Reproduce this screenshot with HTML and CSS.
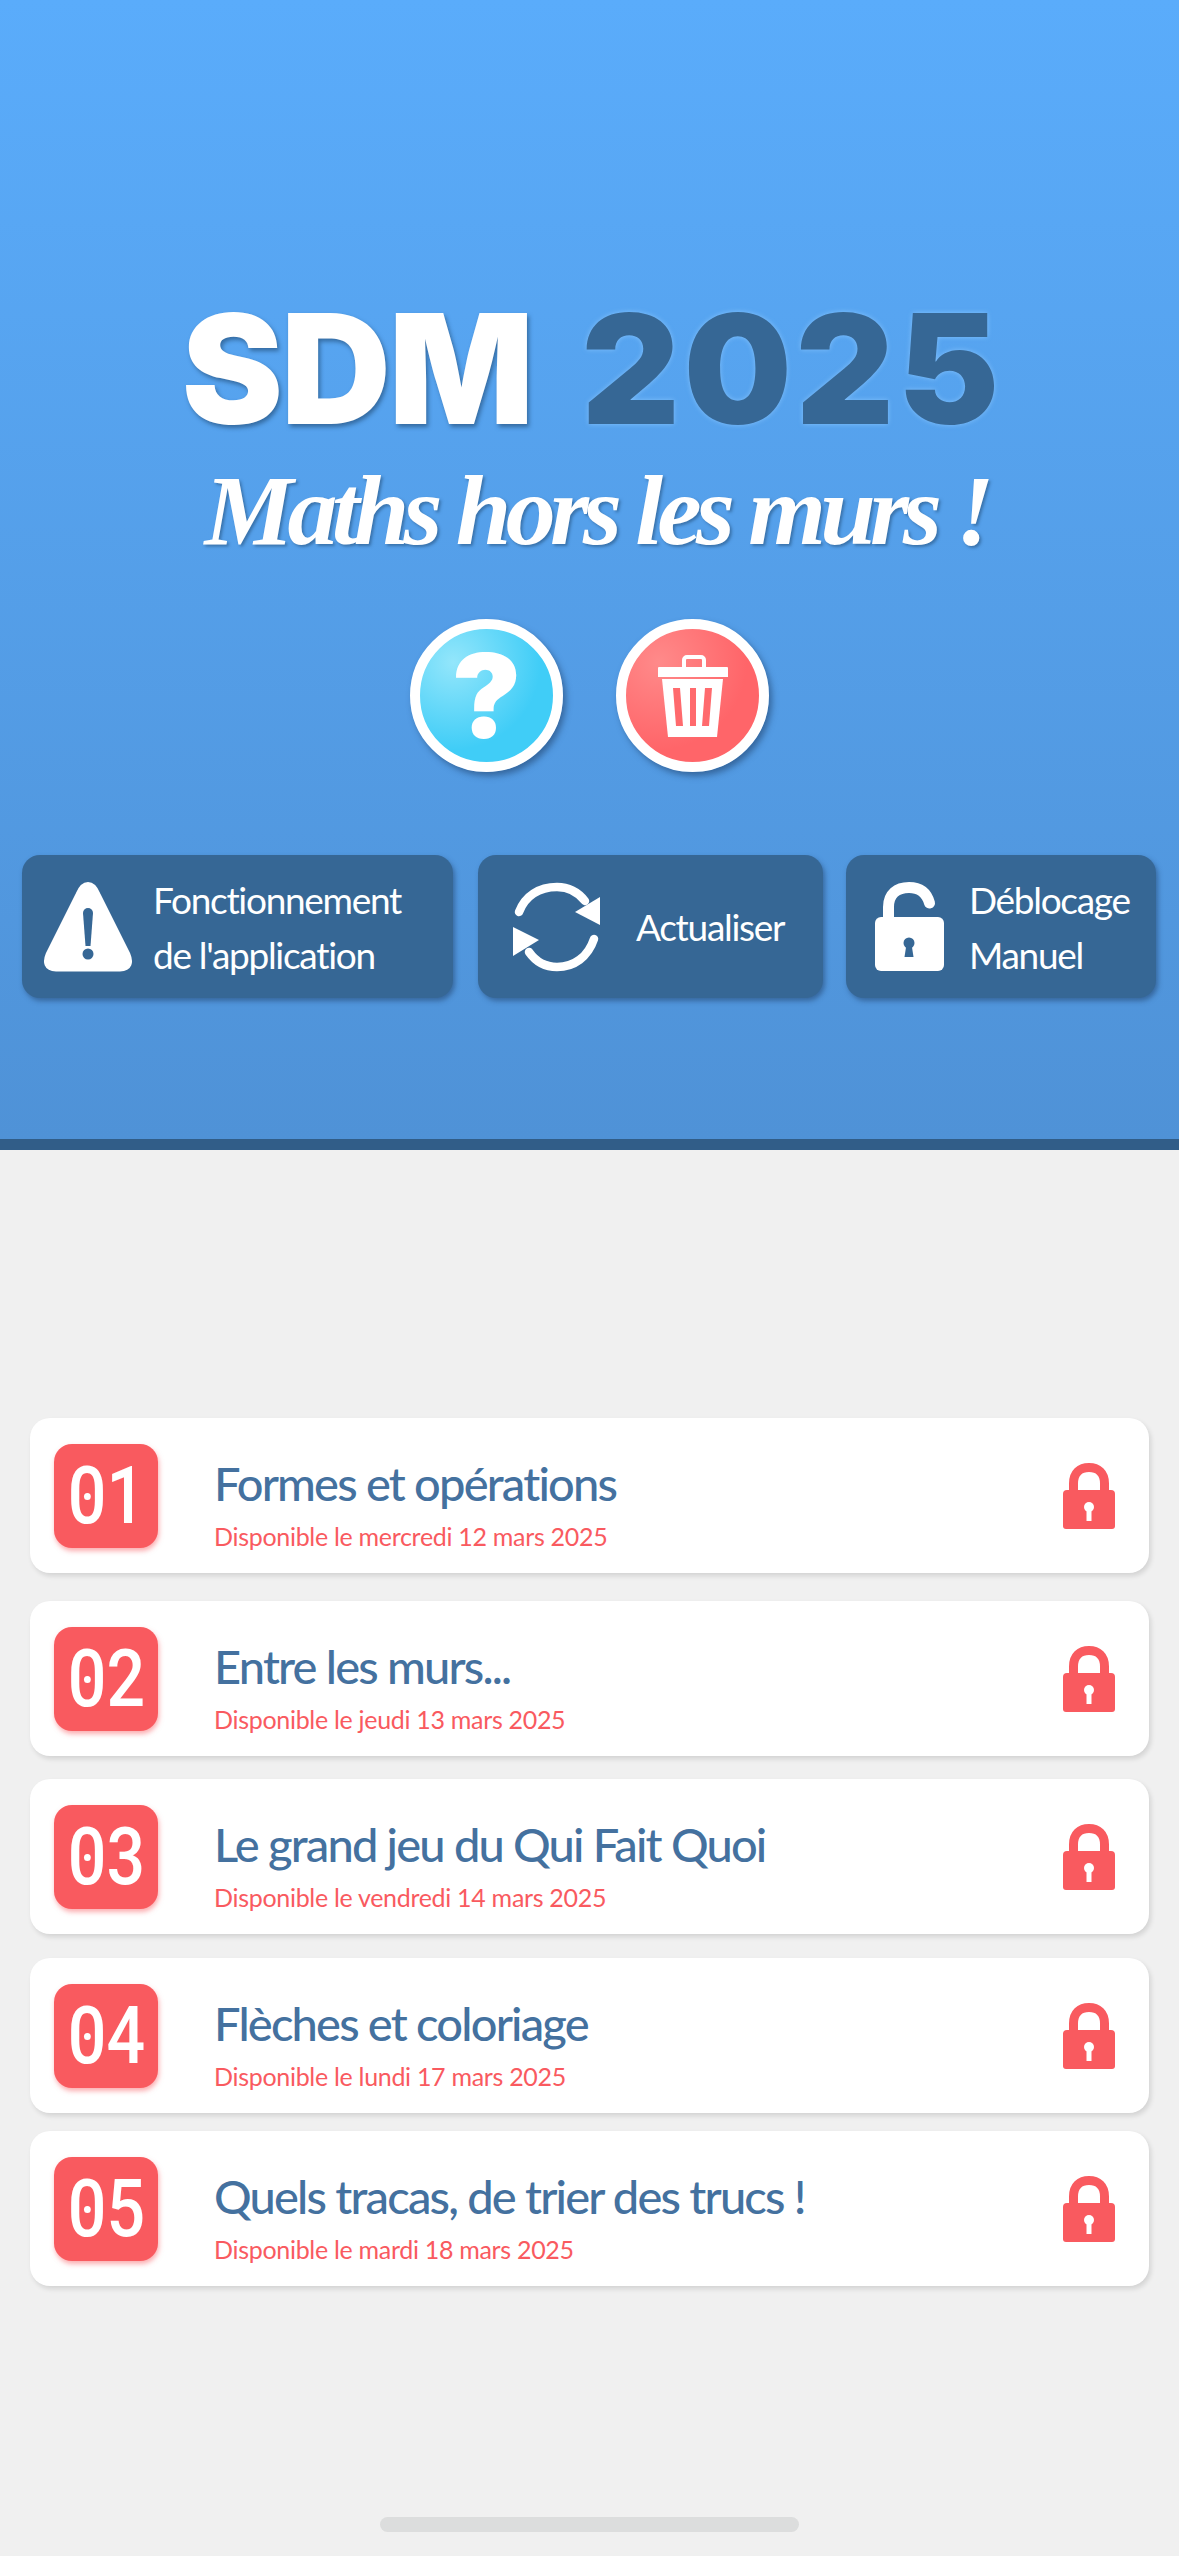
FILE: index.html
```html
<!DOCTYPE html>
<html lang="fr">
<head>
    <meta charset="UTF-8">
    <meta name="viewport" content="width=device-width, initial-scale=1.0">
    <link rel="stylesheet" href="styles.css">
    <title>SDM 2025</title>
</head>
<body>
    <header class="hero">
        <h1 class="logo"><span class="logoWhite">SDM</span> <span class="logoDark">2025</span></h1>
        <p class="tagline">Maths hors les murs !</p>

        <div class="roundBtns">
            <div class="roundBtn helpBtn">?</div>
            <div class="roundBtn trashBtn">
                <svg class="trashIcon" viewBox="0 0 70 82">
                    <path d="M26 12V5a3 3 0 0 1 3-3h14a3 3 0 0 1 3 3v7" fill="none" stroke="#fff" stroke-width="4"/>
                    <path d="M1 12h68a1 1 0 0 1 1 1v9H0v-9a1 1 0 0 1 1-1z" fill="#fff"/>
                    <path d="M4 24h61l-6 58H10z" fill="#fff"/>
                    <path d="M15 33h7l3 38h-7zM32 33h6v38h-6zM47 33h7l-3 38h-7z" fill="#ff6a6d"/>
                </svg>
            </div>
        </div>

        <div class="actions">
            <div class="action actionInfo">
                <svg class="actionIcon" width="90" height="90" viewBox="0 0 90 90">
                    <path d="M45 4.500 C41 4.500 39 8 37 13 L7 73 C4 80 5 85 13 85 H77 C85 85 86 80 83 73 L53 13 C51 8 49 4.500 45 4.500Z" fill="#fff" stroke="#fff" stroke-width="9" stroke-linejoin="round"/>
                    <path d="M40 31a5 5 0 0 1 10 0l-2.500 33h-5z" fill="#366795"/>
                    <circle cx="45" cy="72" r="5.500" fill="#366795"/>
                </svg>
                <span class="actionText">Fonctionnement<br>de l'application</span>
            </div>
            <div class="action actionRefresh">
                <svg class="actionIcon" width="88" height="90" viewBox="0 0 88 90">
                    <path d="M6 30 C12 14 26 5 44 5 C55 5 65 10 72 19" fill="none" stroke="#fff" stroke-width="8.500" stroke-linecap="round"/>
                    <path d="M62 30 L87 15 V43Z" fill="#fff"/>
                    <path d="M81 57 C75 75 61 85 44 85 C33 85 23 80 16 70" fill="none" stroke="#fff" stroke-width="8.500" stroke-linecap="round"/>
                    <path d="M0 45 L26 58 L0 74Z" fill="#fff"/>
                </svg>
                <span class="actionText">Actualiser</span>
            </div>
            <div class="action actionUnlock">
                <svg class="actionIcon" width="69" height="89" viewBox="0 0 69 89">
                    <path d="M13.500 40V25C13.500 12 22 5.500 34 5.500C46 5.500 52 12 54.500 21" fill="none" stroke="#fff" stroke-width="11" stroke-linecap="round"/>
                    <rect y="35" width="69" height="54" rx="6" fill="#fff"/>
                    <circle cx="34" cy="61" r="5.500" fill="#366795"/>
                    <path d="M31.500 62h5l2 13h-9z" fill="#366795"/>
                </svg>
                <span class="actionText">Déblocage<br>Manuel</span>
            </div>
        </div>
    </header>

    <main class="list">
        <div class="card">
            <div class="badge"><span class="num"><span class="zero">0</span>1</span></div>
            <div class="cardText">
                <div class="cardTitle">Formes et opérations</div>
                <div class="cardDate">Disponible le mercredi 12 mars 2025</div>
            </div>
            <svg class="lock" viewBox="0 0 52 66"><use href="#lockShape"/></svg>
        </div>
        <div class="card">
            <div class="badge"><span class="num"><span class="zero">0</span>2</span></div>
            <div class="cardText">
                <div class="cardTitle">Entre les murs...</div>
                <div class="cardDate">Disponible le jeudi 13 mars 2025</div>
            </div>
            <svg class="lock" viewBox="0 0 52 66"><use href="#lockShape"/></svg>
        </div>
        <div class="card">
            <div class="badge"><span class="num"><span class="zero">0</span>3</span></div>
            <div class="cardText">
                <div class="cardTitle">Le grand jeu du Qui Fait Quoi</div>
                <div class="cardDate">Disponible le vendredi 14 mars 2025</div>
            </div>
            <svg class="lock" viewBox="0 0 52 66"><use href="#lockShape"/></svg>
        </div>
        <div class="card">
            <div class="badge"><span class="num"><span class="zero">0</span>4</span></div>
            <div class="cardText">
                <div class="cardTitle">Flèches et coloriage</div>
                <div class="cardDate">Disponible le lundi 17 mars 2025</div>
            </div>
            <svg class="lock" viewBox="0 0 52 66"><use href="#lockShape"/></svg>
        </div>
        <div class="card">
            <div class="badge"><span class="num"><span class="zero">0</span>5</span></div>
            <div class="cardText">
                <div class="cardTitle">Quels tracas, de trier des trucs !</div>
                <div class="cardDate">Disponible le mardi 18 mars 2025</div>
            </div>
            <svg class="lock" viewBox="0 0 52 66"><use href="#lockShape"/></svg>
        </div>
    </main>

    <div class="homeBar"></div>

    <!-- Shared padlock for the cards -->
    <svg class="defs" width="0" height="0">
        <symbol id="lockShape" viewBox="0 0 52 66">
            <path d="M10.500 30V20.500C10.500 10 17 4.500 26 4.500C35 4.500 41.500 10 41.500 20.500V30" fill="none" stroke="#f95a5f" stroke-width="9"/>
            <path d="M4 27H48a4 4 0 0 1 4 4V63a3 3 0 0 1-3 3H3a3 3 0 0 1-3-3V31a4 4 0 0 1 4-4z" fill="#f95a5f"/>
            <circle cx="26" cy="44" r="5" fill="#fff"/>
            <path d="M23.500 45h5v13h-5z" fill="#fff"/>
        </symbol>
    </svg>
</body>
</html>
```

FILE: styles.css
```css
body{
    margin: 0;
    height: 2556px;
    overflow: hidden;
    position: relative;
    background-color: #f0f0f0;
    font-family: "Lato", "Noto Sans", sans-serif;
}

.hero{
    box-sizing: border-box;
    height: 1150px;
    padding-top: 284px;
    background: linear-gradient(#5aacfb, #4f92d7);
    border-bottom: 11px solid #315d88;
}

.logo{
    margin: 0;
    height: 172px;
    padding-left: 6px;
    line-height: 170px;
    text-align: center;
    font-family: "Inter", sans-serif;
    font-size: 152px;
    font-weight: 900;
    letter-spacing: 4px;
    word-spacing: 15px;
}

.logoWhite{
    color: #fff;
    letter-spacing: -2px;
    text-shadow: 2px 3px 4px rgba(30, 70, 110, 0.6);
}

.logoDark{
    color: #366795;
    text-shadow: 0 0 5px rgba(140, 200, 255, 0.8);
}

.tagline{
    margin: 0;
    height: 104px;
    padding-left: 14px;
    line-height: 110px;
    text-align: center;
    color: #fff;
    font-family: "Liberation Serif", serif;
    font-size: 100px;
    font-weight: bold;
    font-style: italic;
    letter-spacing: -5.8px;
    text-shadow: 2px 2px 3px rgba(30, 70, 110, 0.5);
}

.roundBtns{
    display: flex;
    justify-content: center;
    gap: 53px;
    margin-top: 59px;
}

.roundBtn{
    box-sizing: border-box;
    width: 153px;
    height: 153px;
    border: 10px solid #fff;
    border-radius: 50%;
    display: flex;
    justify-content: center;
    align-items: center;
    box-shadow: 3px 4px 6px rgba(30, 60, 100, 0.55);
}

.helpBtn{
    background: radial-gradient(circle at 25% 25%, #93e6fb, #40cdf7 62%);
    color: #fff;
    font-family: "Inter", sans-serif;
    font-size: 116px;
    font-weight: 900;
    line-height: 1;
}

.trashBtn{
    background: radial-gradient(circle at 25% 25%, #ff8a8a, #ff6569 62%);
}

.trashIcon{
    width: 70px;
    height: 82px;
}

.actions{
    display: flex;
    padding-left: 22px;
    margin-top: 83px;
}

.action{
    box-sizing: border-box;
    height: 143px;
    display: flex;
    align-items: center;
    background-color: #366795;
    border-radius: 18px;
    box-shadow: 2px 3px 5px rgba(30, 60, 100, 0.5);
}

.actionIcon{
    flex-shrink: 0;
}

.actionText{
    color: #fff;
    font-size: 37px;
    line-height: 55px;
    letter-spacing: -1.3px;
}

.actionInfo{
    width: 431px;
    padding-left: 21px;
    gap: 20px;
}

.actionRefresh{
    width: 345px;
    margin-left: 25px;
    padding-left: 35px;
    gap: 35px;
}

.actionUnlock{
    width: 310px;
    margin-left: 23px;
    padding-left: 29px;
    gap: 25px;
}

.list{
    padding: 268px 30px 0;
}

.card{
    box-sizing: border-box;
    height: 155px;
    display: flex;
    align-items: center;
    padding: 0 34px 0 24px;
    background-color: #fff;
    border-radius: 20px;
    box-shadow: 2px 3px 5px rgba(0, 0, 0, 0.12);
}

.card:nth-child(2){
    margin-top: 28px;
}

.card:nth-child(3){
    margin-top: 23px;
}

.card:nth-child(4){
    margin-top: 24px;
}

.card:nth-child(5){
    margin-top: 18px;
}

.badge{
    width: 104px;
    height: 104px;
    flex-shrink: 0;
    display: flex;
    justify-content: center;
    align-items: center;
    background-color: #f95a5f;
    border-radius: 18px;
    box-shadow: 1px 3px 5px rgba(249, 90, 95, 0.5);
    color: #fff;
    font-family: "Roboto", sans-serif;
    font-size: 80px;
    font-weight: 500;
}

.num{
    display: inline-block;
    transform: scaleX(0.85);
}

/* dotted zero, none of the installed fonts has one */
.zero{
    position: relative;
}

.zero::after{
    content: "";
    position: absolute;
    left: 50%;
    top: 50%;
    width: 8px;
    height: 7px;
    margin: -3px 0 0 -4px;
    border-radius: 50%;
    background-color: #fff;
}

.cardText{
    margin-left: 56px;
    padding-top: 15px;
}

.cardTitle{
    color: #44719f;
    font-size: 47px;
    line-height: 56px;
    font-weight: 500;
    letter-spacing: -1.8px;
}

.cardDate{
    margin-top: 9px;
    color: #f95a5f;
    font-size: 25px;
    line-height: 32px;
    letter-spacing: -0.3px;
}

.lock{
    width: 52px;
    height: 66px;
    margin-left: auto;
}

.homeBar{
    position: absolute;
    left: 380px;
    bottom: 24px;
    width: 419px;
    height: 15px;
    background-color: #dcdddd;
    border-radius: 8px;
}

.defs{
    position: absolute;
}
```
